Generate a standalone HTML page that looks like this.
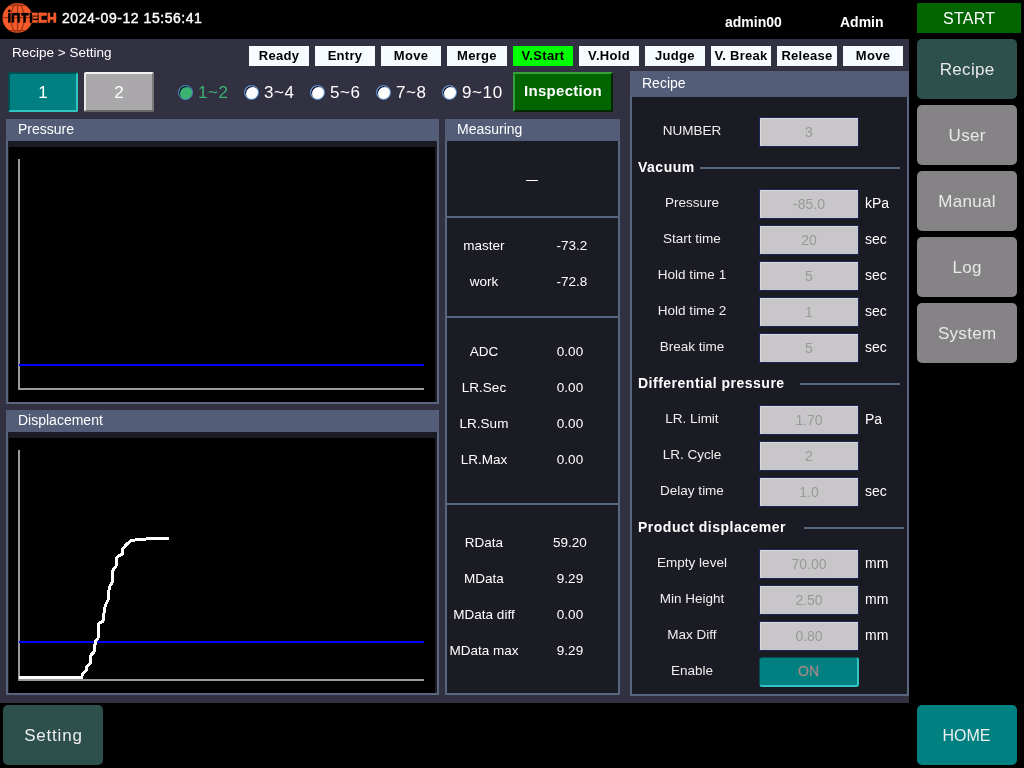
<!DOCTYPE html>
<html><head><meta charset="utf-8">
<style>
*{margin:0;padding:0;box-sizing:border-box}
html,body{width:1024px;height:768px;overflow:hidden;background:#000;font-family:"Liberation Sans",sans-serif;color:#fff;-webkit-font-smoothing:antialiased}
.a{position:absolute}
#body{left:0;top:39px;width:909px;height:664px;background:#323142}
.lbl{top:46px;width:60px;height:20px;background:#f5fbff;color:#000;font-weight:bold;font-size:13px;letter-spacing:0.3px;line-height:20px;text-align:center;white-space:nowrap}
.panel{background:#58667f}
.ph{background:#535d78;color:#fff;font-size:14px}
.pi{background:#1b1b24}
.side{left:917px;width:100px;height:60px;border-radius:5px;background:#868387;color:#e8e8e8;font-size:17px;letter-spacing:0.3px;text-indent:0.3px;text-align:center;line-height:60px;padding-top:1px}
.rad{width:15px;height:15px;border-radius:50%;border:1.5px solid #4a84c8;box-shadow:inset 1px 1px 0 #00082a;background:#fff}
.rt{font-size:17px;letter-spacing:0.6px;color:#fff;line-height:20px}
.m{font-size:13.5px;color:#fff;line-height:16px;text-align:center;width:80px}
.rl{font-size:13.5px;color:#eee;line-height:16px;text-align:center;width:120px;left:632px}
.box{left:759px;width:100px;height:30px;background:#c8c6c9;border:1px solid #16285a;box-shadow:inset 1px 1px 0 #dad8d9;color:#999;font-size:14px;line-height:28px;text-align:center}
.unit{left:865px;font-size:14px;color:#fff;line-height:16px}
.sec{left:638px;font-size:14px;font-weight:bold;letter-spacing:0.5px;color:#fff;line-height:16px}
.hl{height:2px;background:#58667f}
</style></head><body>
<div id="root" style="position:absolute;left:0;top:0;width:1024px;height:768px;will-change:transform">
<!-- header -->
<svg class="a" style="left:0;top:0" width="60" height="38" viewBox="0 0 60 38">
  <defs>
    <clipPath id="gc"><circle cx="17.5" cy="18" r="15"/></clipPath>
    <g id="lt">
      <circle cx="9.3" cy="10.9" r="1.2"/>
      <rect x="8.2" y="13.1" width="2.2" height="9.4"/>
      <path d="M11.9 22.5V14.6Q11.9 13.1 13.4 13.1H19.7V22.5H17.5V15.2H13.9V22.5Z"/>
      <rect x="21.2" y="13.1" width="7.5" height="2.2"/>
      <rect x="23.5" y="13.1" width="2.2" height="9.4"/>
      <rect x="30" y="12.9" width="2.1" height="9.7"/>
      <rect x="30" y="12.9" width="7.6" height="2.6"/>
      <rect x="30" y="16.8" width="7.6" height="1.7"/>
      <rect x="30" y="20.1" width="7.6" height="2.5"/>
      <rect x="38.9" y="12.9" width="2.3" height="9.7"/>
      <rect x="38.9" y="12.9" width="7.9" height="2.7"/>
      <rect x="38.9" y="20" width="7.9" height="2.6"/>
      <rect x="47.9" y="12.9" width="2.1" height="9.7"/>
      <rect x="53.7" y="12.9" width="2.3" height="9.7"/>
      <rect x="47.9" y="17" width="8.1" height="2.6"/>
    </g>
  </defs>
  <circle cx="17.5" cy="18" r="15" fill="#f55a2a"/>
  <g stroke="#9a3414" stroke-width="1.2" fill="none" clip-path="url(#gc)">
    <ellipse cx="17.5" cy="18" rx="6.5" ry="15"/>
    <line x1="17.5" y1="3" x2="17.5" y2="33"/>
    <line x1="2.5" y1="17.7" x2="32.5" y2="17.7"/>
    <line x1="8" y1="5.3" x2="27" y2="5.3"/>
    <line x1="8" y1="30.7" x2="27" y2="30.7"/>
  </g>
  <use href="#lt" fill="#f55a2a" stroke="#f55a2a" stroke-width="0.35"/>
  <g clip-path="url(#gc)"><use href="#lt" fill="#000" stroke="#000" stroke-width="0.35"/></g>
</svg>
<div class="a" style="left:62px;top:10px;font-size:14px;letter-spacing:0.55px;-webkit-text-stroke:0.4px #fff;line-height:16px">2024-09-12 15:56:41</div>
<div class="a" style="left:725px;top:14px;font-size:14px;font-weight:bold;line-height:16px">admin00</div>
<div class="a" style="left:840px;top:14px;font-size:14px;font-weight:bold;line-height:16px">Admin</div>
<div class="a" style="left:917px;top:3px;width:104px;height:30px;background:#006400;font-size:16px;letter-spacing:0.3px;text-indent:0.3px;line-height:30px;padding-top:1px;text-align:center">START</div>

<div id="body" class="a"></div>
<div class="a" style="left:12px;top:45px;font-size:13.5px;line-height:16px">Recipe &gt; Setting</div>
<div class="a lbl" style="left:249px">Ready</div>
<div class="a lbl" style="left:315px">Entry</div>
<div class="a lbl" style="left:381px">Move</div>
<div class="a lbl" style="left:447px">Merge</div>
<div class="a lbl" style="left:513px;background:#00ff00">V.Start</div>
<div class="a lbl" style="left:579px">V.Hold</div>
<div class="a lbl" style="left:645px">Judge</div>
<div class="a lbl" style="left:711px">V. Break</div>
<div class="a lbl" style="left:777px">Release</div>
<div class="a lbl" style="left:843px">Move</div>

<!-- tab buttons -->
<div class="a" style="left:8px;top:72px;width:70px;height:40px;background:#008080;border-top:2px solid #005050;border-left:2px solid #005050;border-right:2px solid #30c4c4;border-bottom:2px solid #30c4c4;border-radius:2px;font-size:17px;line-height:38px;text-align:center">1</div>
<div class="a" style="left:84px;top:72px;width:70px;height:40px;background:#aaa8ab;border-top:2px solid #f0f0f0;border-left:2px solid #e8e8e8;border-right:2px solid #7a7a7a;border-bottom:2px solid #6a6a6a;border-radius:2px;font-size:17px;line-height:38px;text-align:center">2</div>

<div class="a rad" style="left:178px;top:85px;background:#3cb371"></div>
<div class="a rt" style="left:198px;top:83px;color:#3cb371">1~2</div>
<div class="a rad" style="left:244px;top:85px"></div>
<div class="a rt" style="left:264px;top:83px">3~4</div>
<div class="a rad" style="left:310px;top:85px"></div>
<div class="a rt" style="left:330px;top:83px">5~6</div>
<div class="a rad" style="left:376px;top:85px"></div>
<div class="a rt" style="left:396px;top:83px">7~8</div>
<div class="a rad" style="left:442px;top:85px"></div>
<div class="a rt" style="left:462px;top:83px">9~10</div>

<div class="a" style="left:513px;top:72px;width:100px;height:40px;background:#006400;border-top:2px solid #38a038;border-left:2px solid #38a038;border-right:2px solid #002800;border-bottom:2px solid #002800;font-size:15px;font-weight:bold;letter-spacing:0.3px;line-height:34px;text-align:center">Inspection</div>

<!-- Pressure panel -->
<div class="a panel" style="left:6px;top:119px;width:433px;height:285px"></div>
<div class="a ph" style="left:6px;top:119px;width:433px;height:22px;padding-left:12px;line-height:20px">Pressure</div>
<div class="a pi" style="left:8px;top:141px;width:429px;height:261px"></div>
<div class="a" style="left:9px;top:147px;width:426px;height:255px;background:#000"></div>
<div class="a" style="left:18px;top:159px;width:2px;height:231px;background:#999"></div>
<div class="a" style="left:18px;top:388px;width:406px;height:2px;background:#999"></div>
<div class="a" style="left:19px;top:364px;width:405px;height:2px;background:#0000ff"></div>

<!-- Displacement panel -->
<div class="a panel" style="left:6px;top:410px;width:433px;height:285px"></div>
<div class="a ph" style="left:6px;top:410px;width:433px;height:22px;padding-left:12px;line-height:20px">Displacement</div>
<div class="a pi" style="left:8px;top:432px;width:429px;height:261px"></div>
<div class="a" style="left:9px;top:438px;width:426px;height:255px;background:#000"></div>
<div class="a" style="left:18px;top:450px;width:2px;height:231px;background:#999"></div>
<div class="a" style="left:18px;top:679px;width:406px;height:2px;background:#999"></div>
<div class="a" style="left:19px;top:641px;width:405px;height:2px;background:#0000ff"></div>
<svg class="a" style="left:0;top:0" width="440" height="700">
<polyline fill="none" stroke="#fff" stroke-width="3" stroke-linejoin="round" shape-rendering="crispEdges" points="19,677.5 81.5,677.5 83,673 86,671 87,666 90,664 91,655 94,652 95.5,641 98,638.5 99,623 103,621.5 104.5,609 106,604 108,600 109,590 110,586 112.5,581.5 113,570 116,566.5 116.5,558.5 118,556 122.5,554 123,548.5 126.5,544.5 131,540.5 139,539.5 153,538.5 169,538.5"/>
</svg>

<!-- Measuring panel -->
<div class="a panel" style="left:445px;top:119px;width:175px;height:576px"></div>
<div class="a ph" style="left:445px;top:119px;width:175px;height:22px;padding-left:12px;line-height:20px">Measuring</div>
<div class="a pi" style="left:447px;top:141px;width:171px;height:75px"></div>
<div class="a pi" style="left:447px;top:218px;width:171px;height:98px"></div>
<div class="a pi" style="left:447px;top:318px;width:171px;height:185px"></div>
<div class="a pi" style="left:447px;top:505px;width:171px;height:188px"></div>
<div class="a" style="left:526px;top:180px;width:12px;height:1px;background:#fff"></div>
<div class="a m" style="left:444px;top:238px">master</div><div class="a m" style="left:532px;top:238px">-73.2</div>
<div class="a m" style="left:444px;top:274px">work</div><div class="a m" style="left:532px;top:274px">-72.8</div>
<div class="a m" style="left:444px;top:344px">ADC</div><div class="a m" style="left:530px;top:344px">0.00</div>
<div class="a m" style="left:444px;top:380px">LR.Sec</div><div class="a m" style="left:530px;top:380px">0.00</div>
<div class="a m" style="left:444px;top:416px">LR.Sum</div><div class="a m" style="left:530px;top:416px">0.00</div>
<div class="a m" style="left:444px;top:452px">LR.Max</div><div class="a m" style="left:530px;top:452px">0.00</div>
<div class="a m" style="left:444px;top:535px">RData</div><div class="a m" style="left:530px;top:535px">59.20</div>
<div class="a m" style="left:444px;top:571px">MData</div><div class="a m" style="left:530px;top:571px">9.29</div>
<div class="a m" style="left:444px;top:607px">MData diff</div><div class="a m" style="left:530px;top:607px">0.00</div>
<div class="a m" style="left:444px;top:643px">MData max</div><div class="a m" style="left:530px;top:643px">9.29</div>

<!-- Recipe panel -->
<div class="a panel" style="left:630px;top:71px;width:279px;height:625px"></div>
<div class="a ph" style="left:630px;top:71px;width:279px;height:26px;padding-left:12px;line-height:24px">Recipe</div>
<div class="a pi" style="left:632px;top:97px;width:275px;height:597px"></div>

<div class="a rl" style="top:123px">NUMBER</div><div class="a box" style="top:117px">3</div>
<div class="a sec" style="top:159px">Vacuum</div><div class="a hl" style="left:700px;top:167px;width:200px"></div>
<div class="a rl" style="top:195px">Pressure</div><div class="a box" style="top:189px">-85.0</div><div class="a unit" style="top:195px">kPa</div>
<div class="a rl" style="top:231px">Start time</div><div class="a box" style="top:225px">20</div><div class="a unit" style="top:231px">sec</div>
<div class="a rl" style="top:267px">Hold time 1</div><div class="a box" style="top:261px">5</div><div class="a unit" style="top:267px">sec</div>
<div class="a rl" style="top:303px">Hold time 2</div><div class="a box" style="top:297px">1</div><div class="a unit" style="top:303px">sec</div>
<div class="a rl" style="top:339px">Break time</div><div class="a box" style="top:333px">5</div><div class="a unit" style="top:339px">sec</div>
<div class="a sec" style="top:375px">Differential pressure</div><div class="a hl" style="left:800px;top:383px;width:100px"></div>
<div class="a rl" style="top:411px">LR. Limit</div><div class="a box" style="top:405px">1.70</div><div class="a unit" style="top:411px">Pa</div>
<div class="a rl" style="top:447px">LR. Cycle</div><div class="a box" style="top:441px">2</div>
<div class="a rl" style="top:483px">Delay time</div><div class="a box" style="top:477px">1.0</div><div class="a unit" style="top:483px">sec</div>
<div class="a sec" style="top:519px">Product displacemer</div><div class="a hl" style="left:804px;top:527px;width:100px"></div>
<div class="a rl" style="top:555px">Empty level</div><div class="a box" style="top:549px">70.00</div><div class="a unit" style="top:555px">mm</div>
<div class="a rl" style="top:591px">Min Height</div><div class="a box" style="top:585px">2.50</div><div class="a unit" style="top:591px">mm</div>
<div class="a rl" style="top:627px">Max Diff</div><div class="a box" style="top:621px">0.80</div><div class="a unit" style="top:627px">mm</div>
<div class="a rl" style="top:663px">Enable</div>
<div class="a" style="left:759px;top:657px;width:100px;height:30px;background:#008080;border-top:1px solid #005050;border-left:1px solid #005050;border-right:2px solid #30c4c4;border-bottom:2px solid #30c4c4;border-radius:3px;color:#a08888;font-size:14px;-webkit-text-stroke:0.3px #a08888;line-height:27px;text-align:center">ON</div>

<!-- side buttons -->
<div class="a side" style="top:39px;background:#2d504c">Recipe</div>
<div class="a side" style="top:105px">User</div>
<div class="a side" style="top:171px">Manual</div>
<div class="a side" style="top:237px">Log</div>
<div class="a side" style="top:303px">System</div>

<div class="a" style="left:3px;top:705px;width:100px;height:60px;border-radius:5px;background:#2d504c;color:#eee;font-size:17px;letter-spacing:0.8px;text-indent:0.8px;line-height:60px;padding-top:1px;text-align:center">Setting</div>
<div class="a" style="left:917px;top:705px;width:100px;height:60px;border-radius:5px;background:#008080;color:#eee;font-size:16px;line-height:60px;padding-top:1px;padding-right:1px;text-align:center">HOME</div>
</div>
</body></html>
